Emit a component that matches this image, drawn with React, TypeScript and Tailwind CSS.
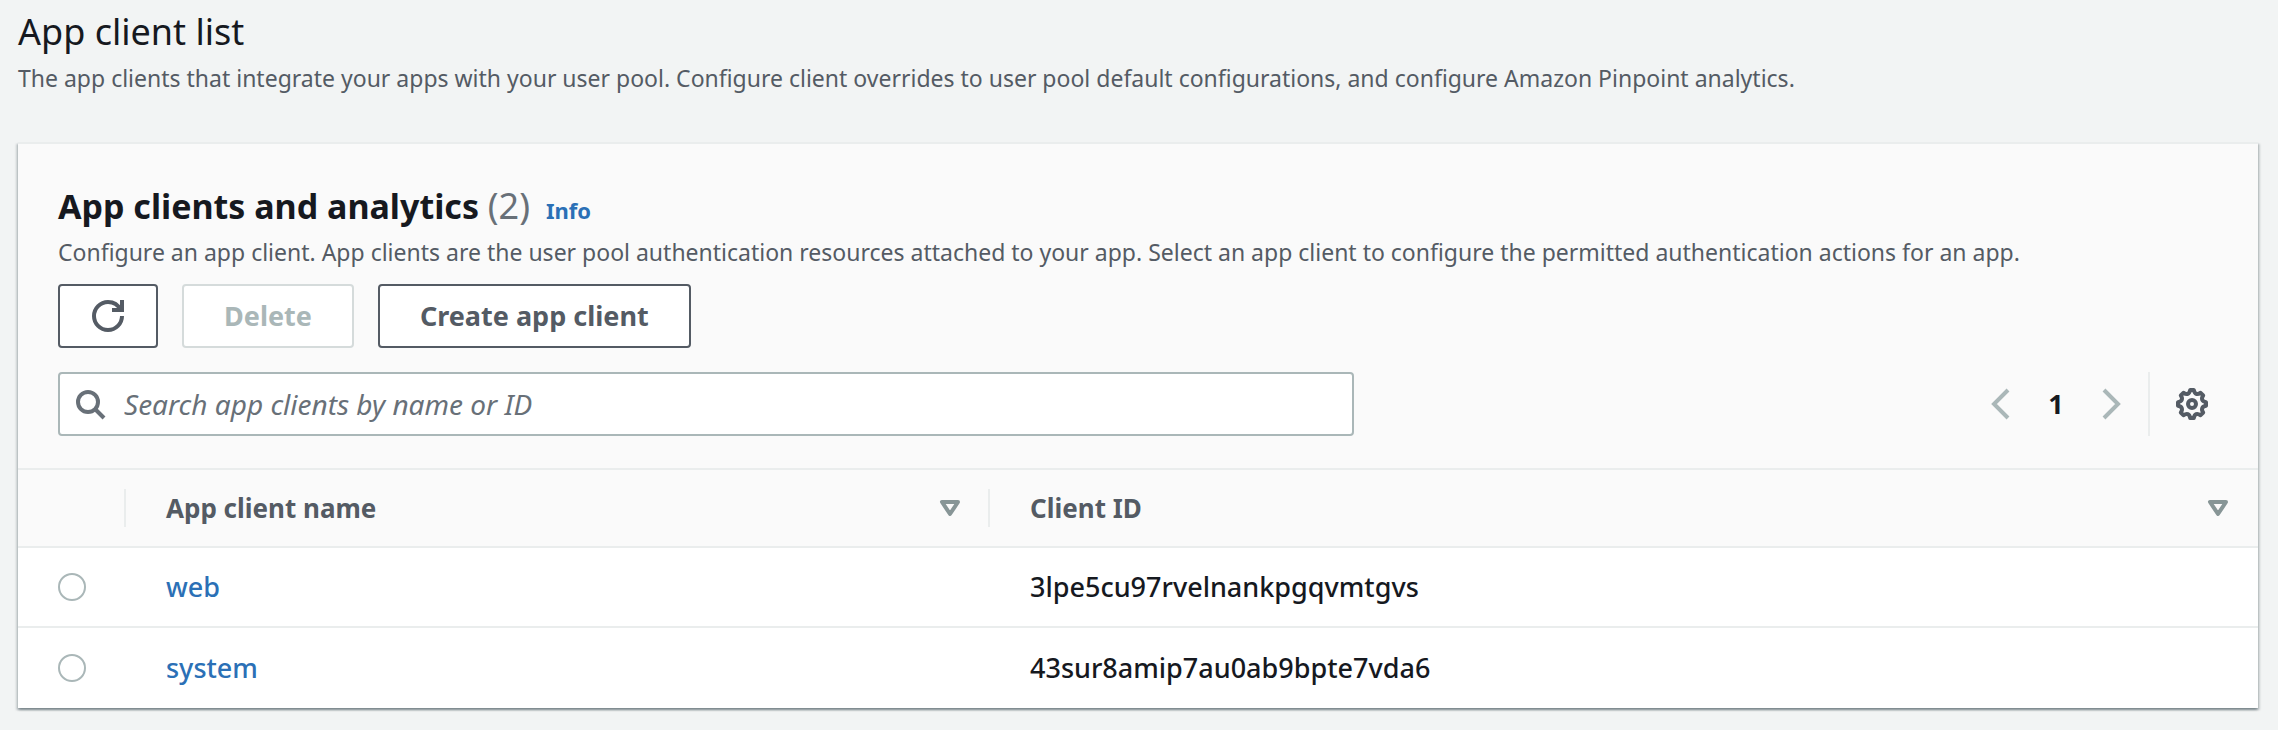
import React, { useState } from "react";

type Client = { name: string; id: string };

const clients: Client[] = [
  { name: "web", id: "3lpe5cu97rvelnankpgqvmtgvs" },
  { name: "system", id: "43sur8amip7au0ab9bpte7vda6" },
];

function Icon({ children, className = "" }: { children: React.ReactNode; className?: string }) {
  return (
    <svg
      viewBox="0 0 16 16"
      className={`size-8 shrink-0 ${className}`}
      fill="none"
      stroke="currentColor"
      strokeWidth="2"
      aria-hidden="true"
    >
      {children}
    </svg>
  );
}

function RefreshIcon() {
  return (
    <Icon>
      <path d="M10 5h5V0" />
      <path d="M15 8c0 3.87-3.13 7-7 7s-7-3.13-7-7 3.13-7 7-7c2.79 0 5.2 1.63 6.33 4" />
    </Icon>
  );
}

function GearIcon() {
  return (
    <Icon>
      <path
        strokeLinejoin="round"
        d="M15 7.1V8.9Q11.9 9.6 13.6 12.3L12.3 13.6Q9.6 11.9 8.9 15H7.1Q6.4 11.9 3.7 13.6L2.4 12.3Q4.1 9.6 1 8.9V7.1Q4.1 6.4 2.4 3.7L3.7 2.4Q6.4 4.1 7.1 1H8.9Q9.6 4.1 12.3 2.4L13.6 3.7Q11.9 6.4 15 7.1Z"
      />
      <circle cx="8" cy="8" r="2" />
    </Icon>
  );
}

function ColumnHeader({ label, divider }: { label: string; divider?: boolean }) {
  return (
    <th scope="col" className="h-[78px] border-b-2 border-[#eaeded] p-0 text-left font-bold">
      <div
        className={`flex h-[38px] items-center justify-between pl-10 ${
          divider ? "border-r-2 border-[#eaeded] pr-[22px]" : "pr-6"
        }`}
      >
        <span>{label}</span>
        <button type="button" aria-label={`Sort by ${label}`} className="text-[#879596]">
          <Icon>
            <path strokeLinejoin="round" d="M4 5h8L8 11Z" />
          </Icon>
        </button>
      </div>
    </th>
  );
}

export default function App() {
  const [selected, setSelected] = useState<string | null>(null);

  return (
    <main className="min-h-screen bg-[#f2f4f4] pt-2.5 pr-5 pb-5 pl-[18px] font-['Noto_Sans',sans-serif] text-[#16191f]">
      <header>
        <h1 className="text-[36px] leading-[44px]">App client list</h1>
        <p className="mt-2 text-[23px] leading-8 text-[#545b64]">
          The app clients that integrate your apps with your user pool. Configure client overrides to user pool default
          configurations, and configure Amazon Pinpoint analytics.
        </p>
      </header>

      <section className="mt-12 border-t-2 border-[#eaeded] bg-white shadow-[0_2px_2px_0_rgba(0,28,36,0.3),2px_2px_2px_0_rgba(0,28,36,0.15),-2px_2px_2px_0_rgba(0,28,36,0.15)]">
        <div className="border-b-2 border-[#eaeded] bg-[#fafafa] px-10 pt-10 pb-8">
          <div className="flex h-11 items-baseline">
            <h2 className="text-[34px] leading-[44px] font-bold">
              App clients and analytics <span className="text-[36px] font-normal text-[#687078]">(2)</span>
            </h2>
            <a href="#info" className="ml-4 text-[22px] leading-8 font-bold text-[#2b70b6]">
              Info
            </a>
          </div>
          <p className="mt-2 text-[23px] leading-8 text-[#545b64]">
            Configure an app client. App clients are the user pool authentication resources attached to your app. Select
            an app client to configure the permitted authentication actions for an app.
          </p>

          <div className="mt-4 flex gap-6 text-[27px] font-bold text-[#545b64]">
            <button
              type="button"
              aria-label="Refresh"
              className="flex h-16 items-center rounded-sm border-2 border-[#545b64] bg-white px-8"
            >
              <RefreshIcon />
            </button>
            <button
              type="button"
              disabled
              className="h-16 rounded-sm border-2 border-[#d5dbdb] bg-white px-10 text-[#aab7b8]"
            >
              Delete
            </button>
            <button type="button" className="h-16 rounded-sm border-2 border-[#545b64] bg-white px-10">
              Create app client
            </button>
          </div>

          <div className="mt-6 flex items-center justify-between">
            <label className="flex h-16 w-3/5 items-center rounded-sm border-2 border-[#aab7b8] bg-white pl-3.5 text-[#687078]">
              <Icon>
                <circle cx="7" cy="7" r="5" />
                <path d="M10.5 10.5 15 15" />
              </Icon>
              <input
                type="search"
                aria-label="Search app clients by name or ID"
                placeholder="Search app clients by name or ID"
                className="h-full flex-1 bg-transparent pl-[18px] text-[28px] text-[#16191f] outline-none placeholder:text-[#687078] placeholder:italic"
              />
            </label>

            <div className="flex items-center">
              <nav aria-label="Pagination" className="flex items-center border-r-2 border-[#eaeded] pr-5 text-[#aab7b8]">
                <button type="button" disabled aria-label="Previous page">
                  <Icon>
                    <path d="M12 1 5 8l7 7" />
                  </Icon>
                </button>
                <button
                  type="button"
                  aria-current="page"
                  className="h-16 w-20 text-center text-[27px] font-bold text-[#16191f]"
                >
                  1
                </button>
                <button type="button" disabled aria-label="Next page">
                  <Icon>
                    <path d="m4 1 7 7-7 7" />
                  </Icon>
                </button>
              </nav>
              <button type="button" aria-label="Preferences" className="mr-2.5 ml-[26px] text-[#545b64]">
                <GearIcon />
              </button>
            </div>
          </div>
        </div>

        <table className="w-full table-fixed border-separate border-spacing-0">
          <colgroup>
            <col className="w-[108px]" />
            <col className="w-[864px]" />
            <col />
          </colgroup>
          <thead className="bg-[#fafafa] text-[26px] text-[#545b64]">
            <tr>
              <th scope="col" aria-label="Selection" className="border-b-2 border-[#eaeded] p-0">
                <div className="h-[38px] border-r-2 border-[#eaeded]" />
              </th>
              <ColumnHeader label="App client name" divider />
              <ColumnHeader label="Client ID" />
            </tr>
          </thead>
          <tbody className="text-[27px] font-medium [&>tr:not(:last-child)>td]:border-b-2">
            {clients.map((client) => (
              <tr key={client.id}>
                <td className="h-20 border-[#eaeded] p-0 pl-10">
                  <input
                    type="radio"
                    name="client"
                    aria-label={`Select ${client.name}`}
                    checked={selected === client.id}
                    onChange={() => setSelected(client.id)}
                    className="block size-7 appearance-none rounded-full border-2 border-[#aab7b8] bg-white checked:border-8 checked:border-[#2b70b6]"
                  />
                </td>
                <td className="h-20 border-[#eaeded] p-0 pl-10">
                  <a href={`#${client.name}`} className="text-[#2b70b6]">
                    {client.name}
                  </a>
                </td>
                <td className="h-20 border-[#eaeded] p-0 pl-10">{client.id}</td>
              </tr>
            ))}
          </tbody>
        </table>
      </section>
    </main>
  );
}
